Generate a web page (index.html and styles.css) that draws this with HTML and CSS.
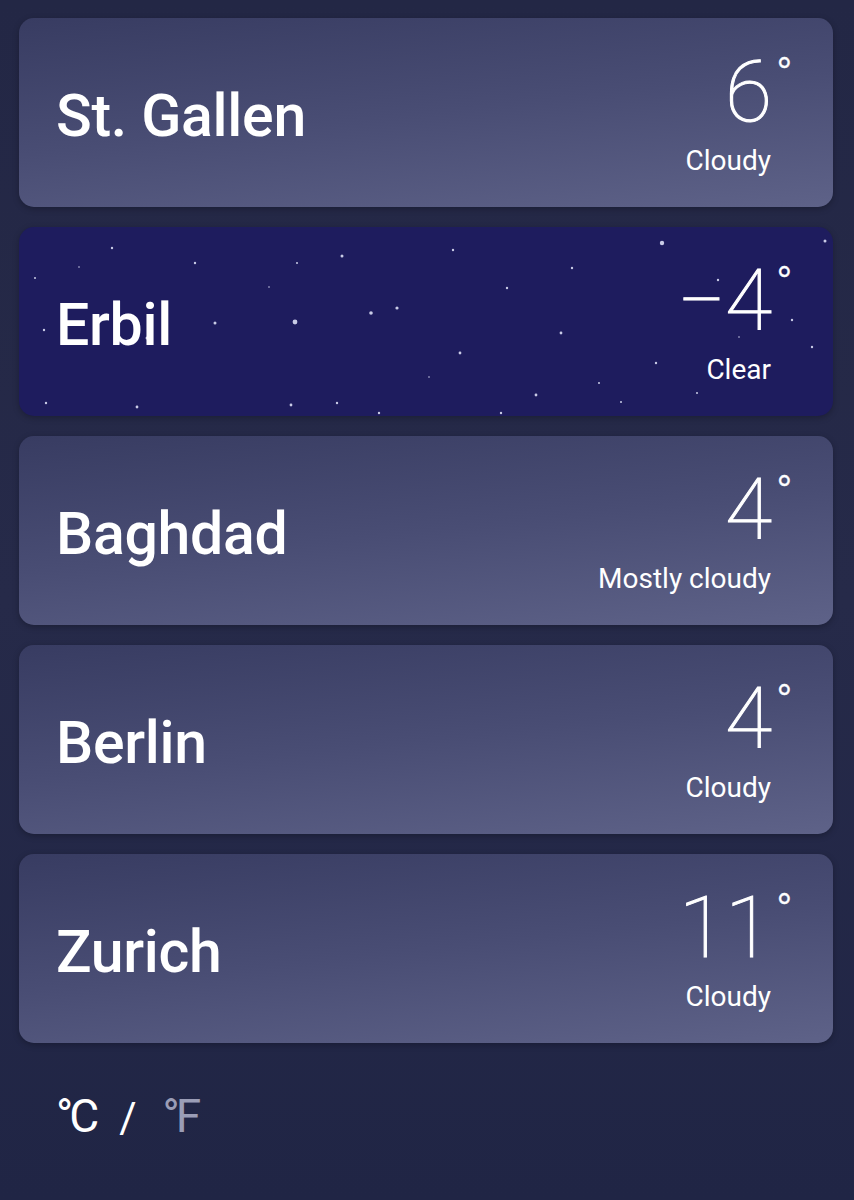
FILE: index.html
```html
<!DOCTYPE html>
<html>
<head>
<meta charset="utf-8">
<link rel="stylesheet" href="styles.css">
</head>
<body>
<main class="list">
  <div class="card">
    <div class="city">St. Gallen</div>
    <div class="weather">
      <div class="temp">6<span class="deg">°</span></div>
      <div class="cond">Cloudy</div>
    </div>
  </div>
  <div class="card night">
    <svg class="stars" width="813" height="188" viewBox="0 0 813 188">
      <g fill="#c9cbe6">
        <circle cx="93" cy="21" r="1.2"/><circle cx="176" cy="36" r="1.2"/><circle cx="323" cy="29" r="1.5"/>
        <circle cx="434" cy="23" r="1.2"/><circle cx="643" cy="16" r="2.2"/><circle cx="806" cy="14" r="1.5"/>
        <circle cx="278" cy="36" r="1"/><circle cx="553" cy="41" r="1.2"/><circle cx="16" cy="51" r="1"/>
        <circle cx="488" cy="61" r="1.2"/><circle cx="699" cy="53" r="1.2"/><circle cx="352" cy="86" r="1.8"/>
        <circle cx="378" cy="81" r="1.6"/><circle cx="276" cy="95" r="2.4"/><circle cx="196" cy="96" r="1.5"/>
        <circle cx="25" cy="103" r="1.2"/><circle cx="128" cy="111" r="1.5"/><circle cx="542" cy="106" r="1.4"/>
        <circle cx="441" cy="126" r="1.4"/><circle cx="773" cy="93" r="1.2"/><circle cx="637" cy="136" r="1.2"/>
        <circle cx="580" cy="156" r="1"/><circle cx="517" cy="168" r="1.4"/><circle cx="678" cy="166" r="1"/>
        <circle cx="27" cy="176" r="1.2"/><circle cx="118" cy="180" r="1.4"/><circle cx="272" cy="178" r="1.4"/>
        <circle cx="318" cy="176" r="1.2"/><circle cx="360" cy="186" r="1.2"/><circle cx="482" cy="186" r="1.2"/>
        <circle cx="602" cy="175" r="1"/><circle cx="793" cy="120" r="1.2"/><circle cx="60" cy="40" r="0.8"/>
        <circle cx="250" cy="60" r="0.8"/><circle cx="720" cy="110" r="0.8"/><circle cx="410" cy="150" r="0.8"/>
      </g>
    </svg>
    <div class="city">Erbil</div>
    <div class="weather">
      <div class="temp">−4<span class="deg">°</span></div>
      <div class="cond">Clear</div>
    </div>
  </div>
  <div class="card">
    <div class="city">Baghdad</div>
    <div class="weather">
      <div class="temp">4<span class="deg">°</span></div>
      <div class="cond">Mostly cloudy</div>
    </div>
  </div>
  <div class="card">
    <div class="city">Berlin</div>
    <div class="weather">
      <div class="temp">4<span class="deg">°</span></div>
      <div class="cond">Cloudy</div>
    </div>
  </div>
  <div class="card">
    <div class="city">Zurich</div>
    <div class="weather">
      <div class="temp">11<span class="deg">°</span></div>
      <div class="cond">Cloudy</div>
    </div>
  </div>
  <div class="units">
    <span class="unit on">°C</span>
    <span class="sep">/</span>
    <span class="unit off">°F</span>
  </div>
</main>
</body>
</html>
```
FILE: styles.css
```css
html, body {
  margin: 0;
  padding: 0;
}
body {
  width: 854px;
  height: 1200px;
  background: linear-gradient(180deg, #232745 0%, #262a49 50%, #202545 100%);
  font-family: Roboto, "Liberation Sans", sans-serif;
  color: #ffffff;
  overflow: hidden;
}
.list {
  display: flex;
  flex-direction: column;
  gap: 20px;
  padding: 18px 21px 0 19px;
}
.card {
  position: relative;
  height: 189px;
  box-sizing: border-box;
  border-radius: 15px;
  background: linear-gradient(174deg, #383c62 0%, #494d74 50%, #5e6288 100%);
  box-shadow: 0 2px 6px rgba(0, 0, 0, 0.25);
  display: flex;
  align-items: center;
  justify-content: space-between;
  padding: 0 62px 0 37px;
  overflow: hidden;
}
.card.night {
  background: #1e1c5e;
}
.stars {
  position: absolute;
  left: 0;
  top: 0;
}
.city {
  position: relative;
  font-size: 59px;
  font-weight: 500;
  letter-spacing: -0.3px;
  margin-top: 6px;
}
.weather {
  position: relative;
  display: flex;
  flex-direction: column;
  align-items: flex-end;
  margin-top: 4px;
}
.temp {
  font-size: 86px;
  font-weight: 100;
  line-height: 80px;
  -webkit-text-stroke: 1px #ffffff;
  letter-spacing: -1px;
}
.deg {
  display: inline-block;
  font-size: 44px;
  font-weight: 300;
  vertical-align: top;
  line-height: 40px;
  margin-top: 2px;
  margin-right: -22px;
  margin-left: 5px;
  -webkit-text-stroke: 0.4px #ffffff;
}
.cond {
  font-size: 28px;
  font-weight: 400;
  margin-top: 12px;
}
.units {
  display: flex;
  align-items: baseline;
  padding: 26px 0 0 37px;
  font-size: 46px;
  font-weight: 400;
}
.unit.on {
  letter-spacing: -4px;
}
.sep {
  font-size: 42px;
  margin: 0 26px 0 24px;
}
.unit.off {
  color: #9a9db6;
  letter-spacing: -4px;
}
```
